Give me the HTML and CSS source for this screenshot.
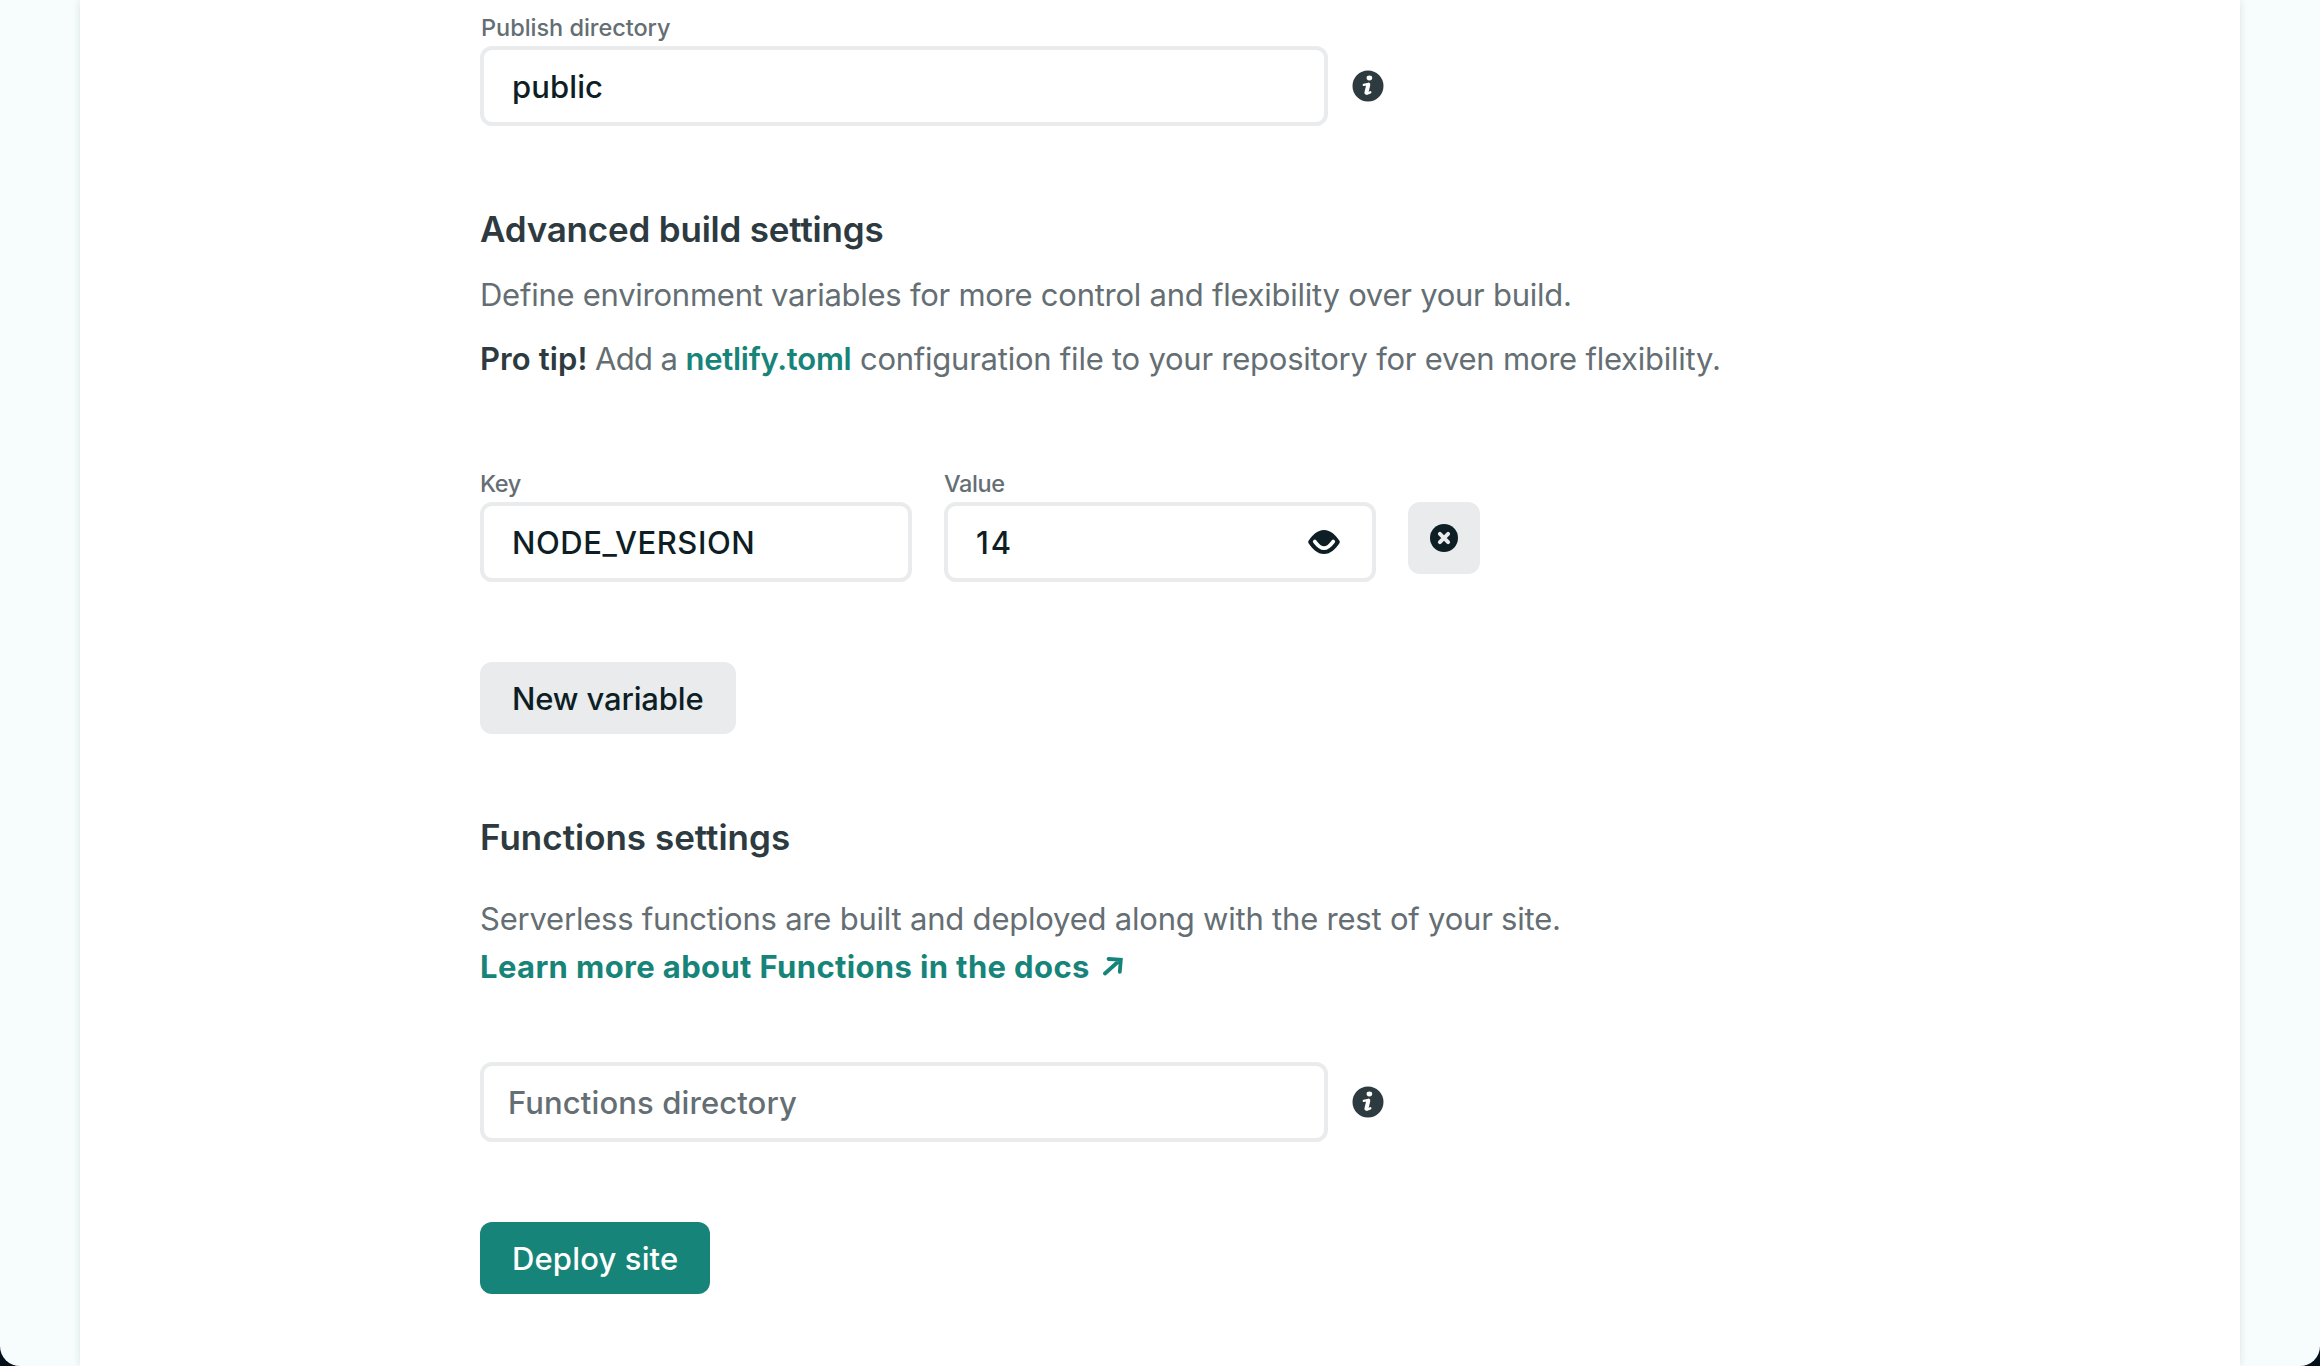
FILE: index.html
```html
<!DOCTYPE html>
<html lang="en">
<head>
<meta charset="utf-8">
<title>Deploy settings</title>
<link rel="stylesheet" href="styles.css">
</head>
<body>
<div class="window">
  <main class="panel">
    <label class="label label-publish">Publish directory</label>
    <div class="field-row">
      <div class="input input-wide"><span class="value-public">public</span></div>
      <svg class="icon-info" viewBox="0 0 32 32"><circle cx="16" cy="16" r="15.5" fill="#2d3b41"/><ellipse cx="17.4" cy="8" rx="2.8" ry="2.4" fill="#fff"/><path d="M11.700 14.800 16.800 13.900 14.600 22.600Q14.400 24.600 18.400 22.200" fill="none" stroke="#fff" stroke-width="2.200" stroke-linecap="round" stroke-linejoin="round"/><path d="M16.300 14.700 14.400 22.700" fill="none" stroke="#fff" stroke-width="4" stroke-linecap="round"/></svg>
    </div>

    <h2 class="heading heading-advanced">Advanced build settings</h2>
    <p class="text text-define">Define environment variables for more control and flexibility over your build.</p>
    <p class="text text-tip"><strong class="tip-strong">Pro tip!</strong> <span class="tip-add">Add a</span> <a class="link tip-link">netlify.toml</a> configuration file to your repository for even more flexibility.</p>

    <div class="variable-row">
      <div class="variable-field">
        <label class="label label-short">Key</label>
        <div class="input"><span class="value-key">NODE_VERSION</span></div>
      </div>
      <div class="variable-field">
        <label class="label label-short">Value</label>
        <div class="input input-secret">
          <span class="value-number">14</span>
          <svg class="icon-eye" viewBox="0 0 32 24"><path d="M.6 10.800C4.200 5.300 9.400 0 16 0s11.800 5.300 15.400 10.800q.8 1.200 0 2.400C27.800 18.700 22.600 24 16 24S4.200 18.700.6 13.200q-.8-1.200 0-2.400Z" fill="#0e1e25"/><path d="M6.800 11.600C9.200 14.800 12 18.200 16 18.200s6.800-3.400 9.200-6.600" fill="none" stroke="#fff" stroke-width="3.800" stroke-linecap="round"/><circle cx="16" cy="11.600" r="4.200" fill="#0e1e25"/></svg>
        </div>
      </div>
      <button class="button button-delete" aria-label="Delete variable">
        <svg class="icon-remove" viewBox="0 0 28 28"><circle cx="14" cy="14" r="14" fill="#0e1e25"/><path d="m9.900 9.900 8.200 8.200m0-8.200-8.200 8.200" stroke="#e9ebec" stroke-width="4" stroke-linecap="round"/></svg>
      </button>
    </div>
    <button class="button button-new">New variable</button>

    <h2 class="heading heading-functions">Functions settings</h2>
    <p class="text text-serverless">Serverless functions are built and deployed along with the rest of your site.</p>
    <a class="link docs-link">Learn more about Functions in the docs<svg class="icon-arrow" viewBox="0 0 20 19"><path d="M2 16.500 17 3M5.500 2 17.800 2.700 16.800 14.800" fill="none" stroke="#17847a" stroke-width="3.800" stroke-linecap="round" stroke-linejoin="miter"/></svg></a>

    <div class="field-row functions-row">
      <div class="input input-wide input-placeholder"><span class="value-directory">Functions directory</span></div>
      <svg class="icon-info" viewBox="0 0 32 32"><circle cx="16" cy="16" r="15.5" fill="#2d3b41"/><ellipse cx="17.4" cy="8" rx="2.8" ry="2.4" fill="#fff"/><path d="M11.700 14.800 16.800 13.900 14.600 22.600Q14.400 24.600 18.400 22.200" fill="none" stroke="#fff" stroke-width="2.200" stroke-linecap="round" stroke-linejoin="round"/><path d="M16.300 14.700 14.400 22.700" fill="none" stroke="#fff" stroke-width="4" stroke-linecap="round"/></svg>
    </div>
    <button class="button button-deploy">Deploy site</button>
  </main>
</div>
</body>
</html>
```
FILE: styles.css
```css
* { box-sizing: border-box; }
body {
  margin: 0;
  background: #04101a;
  font-family: Inter, "Liberation Sans", sans-serif;
  color: #0e1e25;
}
.window {
  height: 1366px;
  padding: 0 80px;
  overflow: hidden;
  background: #f7fdfd;
  border-radius: 0 0 20px 20px;
}
.panel {
  display: flex;
  flex-direction: column;
  align-items: flex-start;
  height: 100%;
  padding: 13px 400px 0;
  background: #fff;
  box-shadow: 0 0 8px rgba(14, 30, 37, .12);
}
.label {
  display: block;
  margin-bottom: 4px;
  font-size: 23.5px;
  font-weight: 500;
  line-height: 29px;
  color: #646e73;
}
.label-publish { padding-left: 1px; letter-spacing: -.03px; }
.label-short { letter-spacing: -.4px; }
.field-row { display: flex; align-items: center; gap: 24px; }
.input {
  width: 100%;
  height: 80px;
  padding: 18px 28px 17px;
  border: 4px solid #e9ebec;
  border-radius: 12px;
  background: #fff;
  font-size: 31px;
  font-weight: 500;
  line-height: 37px;
}
.input-wide { width: 848px; }
.input-placeholder { padding-left: 24px; color: #646e73; }
.input-secret { display: flex; justify-content: space-between; padding-right: 32px; }
.value-public { letter-spacing: .1px; }
.value-key { letter-spacing: .55px; }
.value-number { letter-spacing: 2px; }
.value-directory { letter-spacing: .11px; }
.icon-info { width: 32px; height: 32px; }
.icon-eye { width: 32px; height: 24px; margin-top: 6px; }
.icon-remove { display: block; width: 28px; height: 28px; }
.heading {
  margin: 0;
  font-size: 35px;
  font-weight: 600;
  line-height: 48px;
  font-variant-ligatures: none;
  color: #2d3b41;
}
.heading-advanced { margin-top: 79px; letter-spacing: -.2px; }
.heading-functions { margin-top: 79px; }
.text {
  margin: 0;
  font-size: 31px;
  line-height: 47px;
  color: #646e73;
  white-space: nowrap;
}
.text-define { margin-top: 18px; letter-spacing: -.253px; }
.text-tip { margin-top: 17px; letter-spacing: -.237px; }
.text-serverless { margin-top: 34px; letter-spacing: -.213px; }
.tip-strong { font-weight: 600; letter-spacing: .1px; color: #2d3b41; }
.tip-add { margin: 0 -.5px 0 -1px; letter-spacing: -.6px; }
.tip-link { letter-spacing: -.25px; }
.link { font-weight: 600; color: #17847a; }
.docs-link {
  display: flex;
  align-items: center;
  gap: 13px;
  margin-top: 1px;
  font-size: 31px;
  font-weight: 700;
  line-height: 47px;
  letter-spacing: .367px;
  white-space: nowrap;
}
.icon-arrow { width: 20px; height: 19px; }
.variable-row { display: flex; align-items: flex-end; gap: 32px; margin-top: 87px; }
.variable-field { width: 432px; }
.button {
  height: 72px;
  padding: 18px 0 17px 32px;
  border: 0;
  border-radius: 12px;
  background: #e9ebec;
  font-family: inherit;
  font-size: 31px;
  font-weight: 500;
  line-height: 37px;
  text-align: left;
  white-space: nowrap;
  color: #0e1e25;
}
.button-delete {
  display: flex;
  justify-content: center;
  width: 72px;
  margin-bottom: 8px;
  padding: 22px 0;
}
.button-new { width: 256px; margin-top: 80px; letter-spacing: -.146px; }
.functions-row { margin-top: 72px; }
.button-deploy {
  width: 230px;
  margin-top: 80px;
  background: #17847a;
  color: #fff;
  letter-spacing: .146px;
}
```
